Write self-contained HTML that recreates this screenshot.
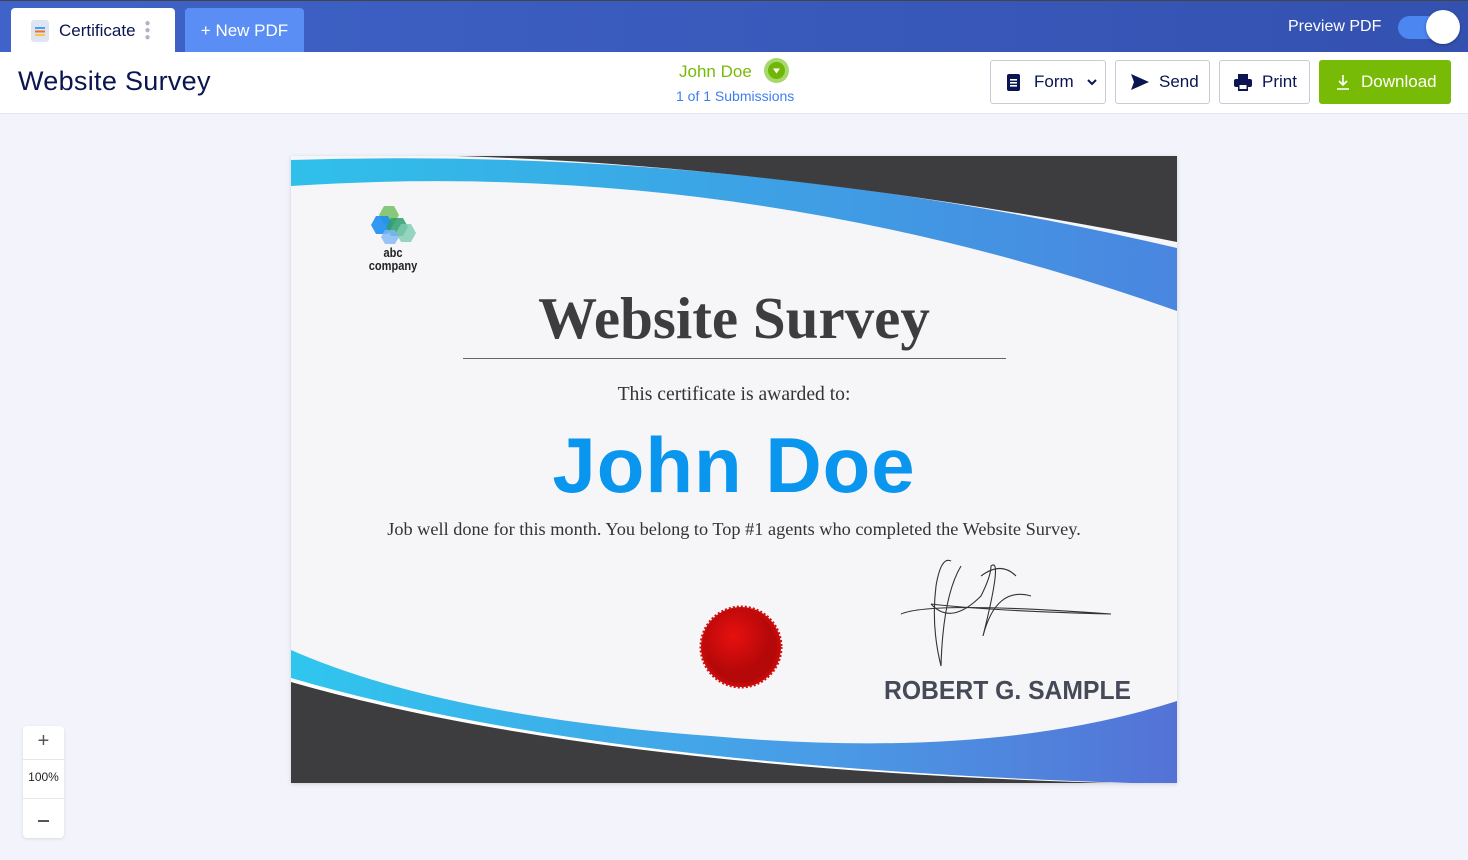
<!DOCTYPE html>
<html><head><meta charset="utf-8"><style>
*{box-sizing:border-box;margin:0;padding:0}
body{width:1468px;height:860px;overflow:hidden;background:#f2f3fb;font-family:"Liberation Sans",sans-serif;position:relative}
.top{position:absolute;left:0;top:0;width:1468px;height:52px;background:linear-gradient(90deg,#3f63c8,#3451b0);border-top:1px solid #444}
.tab{position:absolute;top:7px;height:45px;border-radius:4px 4px 0 0;display:flex;align-items:center;font-size:17px}
.bar{position:absolute;left:0;top:52px;width:1468px;height:62px;background:#fff;border-bottom:1px solid #e3e5ef}
.btn{position:absolute;top:60px;height:44px;border:1px solid #c8cad6;border-radius:3px;background:#fff;display:flex;align-items:center;font-size:17px;color:#0a1551}
.cert{position:absolute;left:291px;top:156px;width:886px;height:627px;background:#f6f6f8;box-shadow:0 1px 4px rgba(0,0,0,.15);overflow:hidden}
</style></head><body>
<div class="top">
 <div class="tab" style="left:11px;width:164px;background:#fff;color:#0a1551">
  <svg style="margin-left:20px" width="18" height="22" viewBox="0 0 18 22"><rect width="18" height="22" rx="3" fill="#dfe4f3"/><rect x="4" y="7" width="10" height="2" fill="#3aa6f5"/><rect x="4" y="10.5" width="10" height="2" fill="#f26b2a"/><rect x="4" y="14" width="10" height="2" fill="#f6c745"/></svg>
  <span style="margin-left:10px">Certificate</span>
  <span style="margin-left:9px;color:#b0b3c4;font-size:10px;line-height:7px;width:6px">●<br>●<br>●</span>
 </div>
 <div class="tab" style="left:185px;width:119px;background:#5b8ef5;color:#fff;justify-content:center">+ New PDF</div>
 <div style="position:absolute;left:1288px;top:17px;color:#fff;font-size:16px">Preview PDF</div>
 <div style="position:absolute;left:1398px;top:15px;width:60px;height:23px;border-radius:12px;background:#4c86f0"></div>
 <div style="position:absolute;left:1426px;top:9px;width:34px;height:34px;border-radius:50%;background:#fff;box-shadow:0 1px 3px rgba(0,0,0,.3)"></div>
</div>
<div class="bar"></div>
<div style="position:absolute;left:18px;top:66px;font-size:27px;color:#0a1551;letter-spacing:.3px">Website Survey</div>
<div style="position:absolute;left:679px;top:62px;font-size:17px;color:#78bb07">John Doe</div>
<div style="position:absolute;left:764px;top:58px;width:25px;height:25px;border-radius:50%;background:#a6d86b"></div>
<div style="position:absolute;left:768px;top:62px;width:17px;height:17px;border-radius:50%;background:#6fb606"><svg width="17" height="17"><path d="M5 6.5h7l-3.5 5z" fill="#fff"/></svg></div>
<div style="position:absolute;left:676px;top:88px;font-size:14px;color:#3f7ef0">1 of 1 Submissions</div>
<div class="btn" style="left:990px;width:116px"><svg style="margin-left:16px" width="13" height="17"><rect width="13" height="17" rx="2" fill="#0a1551"/><rect x="3" y="5" width="7" height="1.6" fill="#fff"/><rect x="3" y="8" width="7" height="1.6" fill="#fff"/><rect x="3" y="11" width="7" height="1.6" fill="#fff"/></svg><span style="margin-left:14px">Form</span><svg style="margin-left:12px" width="12" height="8"><path d="M2 2l4 4 4-4" stroke="#0a1551" stroke-width="2" fill="none"/></svg></div>
<div class="btn" style="left:1115px;width:95px"><svg style="margin-left:15px" width="18" height="16"><path d="M0 0l18 8-18 8 3-8z" fill="#0a1551"/></svg><span style="margin-left:10px">Send</span></div>
<div class="btn" style="left:1219px;width:91px"><svg style="margin-left:14px" width="18" height="17"><rect x="4" y="0" width="10" height="5" fill="#0a1551"/><rect x="0" y="5" width="18" height="8" rx="2" fill="#0a1551"/><rect x="4" y="10" width="10" height="7" fill="#0a1551"/><rect x="5.5" y="11" width="7" height="4" fill="#fff"/></svg><span style="margin-left:10px">Print</span></div>
<div class="btn" style="left:1319px;width:132px;background:#78bb07;border-color:#78bb07;color:#fff"><svg style="margin-left:16px" width="14" height="16"><path d="M7 1v10M3 7l4 4 4-4M1 15h12" stroke="#fff" stroke-width="1.6" fill="none"/></svg><span style="margin-left:11px">Download</span></div>

<div class="cert">
<svg width="886" height="627" style="position:absolute;left:0;top:0">
 <defs>
  <linearGradient id="g1" x1="0" x2="1"><stop offset="0" stop-color="#2fc0ea"/><stop offset="1" stop-color="#4a86e0"/></linearGradient>
  <linearGradient id="g2" x1="0" x2="1"><stop offset="0" stop-color="#2fc6ee"/><stop offset=".6" stop-color="#4a9be6"/><stop offset="1" stop-color="#5472d6"/></linearGradient>
  <radialGradient id="sr" cx=".4" cy=".35"><stop offset="0" stop-color="#e81010"/><stop offset="1" stop-color="#b50808"/></radialGradient>
 </defs>
 <path d="M0 4 Q450 -10 886 92 L886 155 Q450 0 0 30Z" fill="url(#g1)"/>
 <path d="M165 0 L886 0 L886 86 Q500 10 165 0Z" fill="#3d3d40"/>
 <path d="M0 494 Q150 560 420 580 Q700 605 886 545 L886 627 L0 627Z" fill="url(#g2)"/>
 <path d="M0 522 Q300 610 840 627 L0 627Z" fill="#fff"/>
 <path d="M0 526 Q300 612 820 627 L0 627Z" fill="#3d3d40"/>
 <g transform="translate(450 491)">
  <circle r="40" fill="#c30a0a" stroke="#d01010" stroke-width="3" stroke-dasharray="2 2"/>
  <circle r="36" fill="url(#sr)"/>
 </g>
 <g fill="none" stroke="#333" stroke-width="1.1">
  <path d="M610 458 Q640 445 820 458 Q700 455 640 448"/>
  <path d="M660 405 Q650 400 645 430 Q640 470 650 510 Q652 440 670 410"/>
  <path d="M640 448 Q660 470 690 440 Q700 420 700 410 Q712 400 692 480 Q705 430 740 440"/>
  <path d="M690 420 Q710 405 725 420"/>
 </g>
 <g transform="translate(80 50)">
  <polygon points="13,0 23,0 28,9 23,18 13,18 8,9" fill="#7cc36a" opacity=".9"/>
  <polygon points="5,10 17,10 22,19 17,28 5,28 0,19" fill="#1e8ef0" opacity=".9"/>
  <polygon points="20,12 32,12 37,21 32,30 20,30 15,21" fill="#2e9e6e" opacity=".85"/>
  <polygon points="30,18 40,18 45,27 40,36 30,36 25,27" fill="#7dcdb0" opacity=".8"/>
  <polygon points="14,24 24,24 28,31 24,38 14,38 10,31" fill="#7fb8f5" opacity=".8"/>
 </g>
</svg>
<div style="position:absolute;left:72px;top:90px;width:60px;text-align:center;font-family:'Liberation Sans Narrow','Liberation Sans',sans-serif;font-weight:bold;font-size:13px;line-height:13px;color:#222;transform:scaleX(.85)">abc<br>company</div>
<div style="position:absolute;left:0;width:886px;top:128px;text-align:center;font-family:'Liberation Serif',serif;font-weight:bold;font-size:59px;color:#3d3d40">Website Survey</div>
<div style="position:absolute;left:172px;top:202px;width:543px;height:1px;background:#666"></div>
<div style="position:absolute;left:0;width:886px;top:228px;text-align:center;font-family:'Liberation Serif',serif;font-size:19.6px;color:#333">This certificate is awarded to:</div>
<div style="position:absolute;left:0;width:886px;top:264px;text-align:center;font-weight:bold;font-size:78px;line-height:90px;color:#0a96ee;letter-spacing:1px">John Doe</div>
<div style="position:absolute;left:0;width:886px;top:363px;text-align:center;font-family:'Liberation Serif',serif;font-size:18.3px;color:#333">Job well done for this month. You belong to Top #1 agents who completed the Website Survey.</div>
<div style="position:absolute;left:593px;top:519px;font-weight:bold;font-size:26px;color:#464a58;transform:scaleX(.95);transform-origin:left">ROBERT G. SAMPLE</div>
</div>

<div style="position:absolute;left:23px;top:726px;width:41px;height:112px;background:#fff;border-radius:4px;box-shadow:0 1px 3px rgba(0,0,0,.1)">
 <div style="position:absolute;top:4px;width:41px;text-align:center;font-size:20px;color:#555">+</div>
 <div style="position:absolute;top:33px;left:0;width:41px;height:1px;background:#e3e5ef"></div>
 <div style="position:absolute;top:44px;width:41px;text-align:center;font-size:12px;color:#222">100%</div>
 <div style="position:absolute;top:72px;left:0;width:41px;height:1px;background:#e3e5ef"></div>
 <div style="position:absolute;top:94px;left:15px;width:11px;height:2px;background:#555"></div>
</div>
</body></html>
